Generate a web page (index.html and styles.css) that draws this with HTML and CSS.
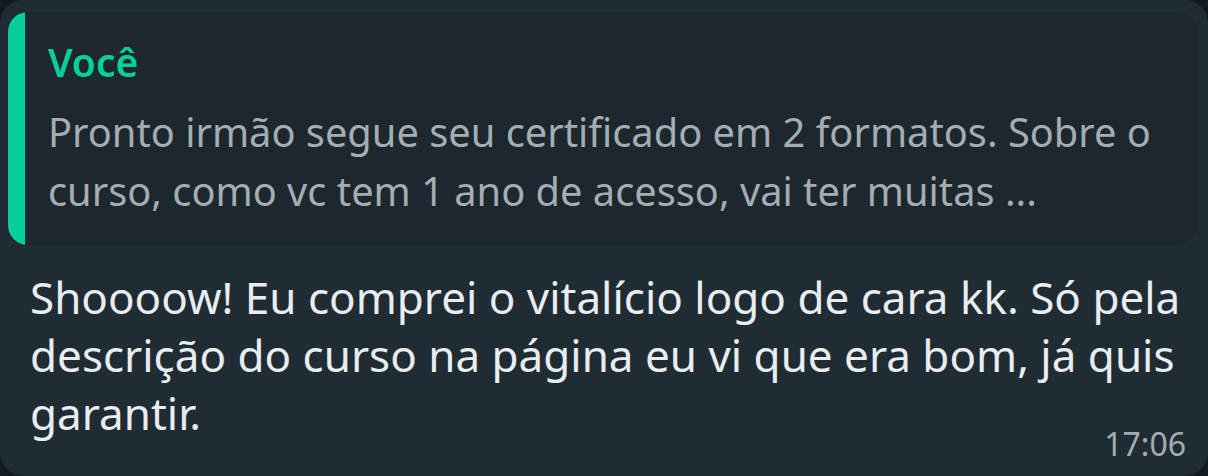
FILE: index.html
```html
<!DOCTYPE html>
<html lang="pt-BR">
<head>
  <meta charset="UTF-8">
  <meta name="viewport" content="width=device-width, initial-scale=1.0">
  <title>Mensagem</title>
  <link rel="stylesheet" href="styles.css">
</head>
<body>
  <!-- Balão da mensagem -->
  <div class="bubble">
    <!-- Mensagem citada -->
    <div class="quote">
      <span class="quote-bar"></span>
      <div class="quote-body">
        <p class="quote-author">Você</p>
        <p class="quote-text">Pronto irmão segue seu certificado em 2 formatos. Sobre o curso, como vc tem 1 ano de acesso, vai ter muitas ...</p>
      </div>
    </div>

    <p class="message">
      <span class="message-text">Shoooow! Eu comprei o vitalício logo de cara kk. Só pela descrição do curso na página eu vi que era bom, já quis garantir.</span>
      <span class="message-time">17:06</span>
    </p>
  </div>
</body>
</html>
```

FILE: styles.css
```css
/* Reset */
* {
  margin: 0;
  padding: 0;
  box-sizing: border-box;
  font-family: "Noto Sans", "Open Sans", sans-serif;
}

body {
  width: 1208px;
  height: 476px;
  background-color: #111b21;
  overflow: hidden;
}

/* Balão */
.bubble {
  display: flex;
  flex-direction: column;
  width: 1208px;
  height: 476px;
  padding: 12px 11px 0 8px;
  background-color: #202c33;
  border-radius: 24px;
}

/* Citação */
.quote {
  display: flex;
  flex: none;
  height: 233px;
  background-color: #1c272e;
  border-radius: 20px;
  overflow: hidden;
}

.quote-bar {
  flex: none;
  width: 17px;
  background-color: #06cf9c;
}

.quote-body {
  padding: 30px 10px 0 23px;
}

.quote-author {
  font-size: 39px;
  font-weight: 600;
  line-height: 40px;
  color: #06cf9c;
}

.quote-text {
  margin-top: 20px;
  font-size: 39.8px;
  line-height: 59px;
  color: #a4adb3;
}

/* Texto principal */
.message {
  margin-top: 23px;
  padding-left: 22px;
  font-size: 44px;
  line-height: 58px;
  color: #e9edef;
}

.message-time {
  float: right;
  margin-top: 42px;
  margin-right: 11px;
  font-size: 32px;
  line-height: 36px;
  color: #a3acb2;
}
```
